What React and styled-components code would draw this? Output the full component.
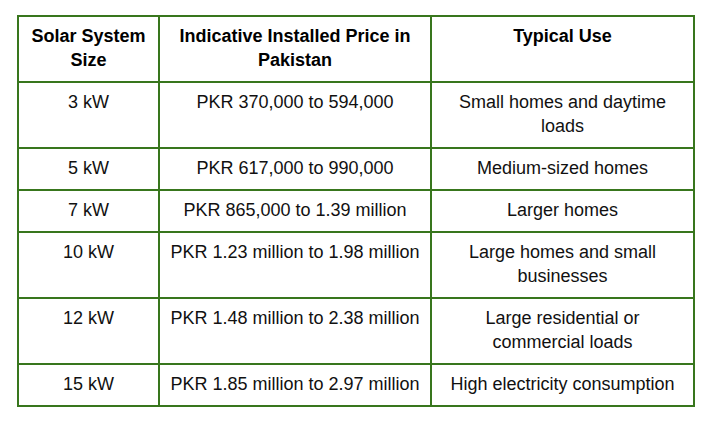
import React from 'react'
import styled, { createGlobalStyle } from 'styled-components'

const GlobalStyle = createGlobalStyle`
  html, body {
    margin: 0;
    padding: 0;
    background: #fff;
  }
`

const Page = styled.div`
  padding: 15px 17px;
  font-family: 'Liberation Sans', Arial, sans-serif;
  color: #111;
`

const Table = styled.table`
  width: 678px;
  border-collapse: collapse;
  table-layout: fixed;
  border: 2px solid #38761d;
`

const Col = styled.col`
  width: ${({ $w }) => $w}px;
`

const Cell = styled.td`
  border: 2px solid #38761d;
  padding: 7px 6px 9px;
  font-size: 18px;
  line-height: 24px;
  text-align: center;
  vertical-align: top;
  font-weight: ${({ $head }) => ($head ? 700 : 400)};
  color: ${({ $head }) => ($head ? '#000' : '#111')};
`

const rows = [
  [['3 kW'], ['PKR 370,000 to 594,000'], ['Small homes and daytime', 'loads']],
  [['5 kW'], ['PKR 617,000 to 990,000'], ['Medium-sized homes']],
  [['7 kW'], ['PKR 865,000 to 1.39 million'], ['Larger homes']],
  [['10 kW'], ['PKR 1.23 million to 1.98 million'], ['Large homes and small', 'businesses']],
  [['12 kW'], ['PKR 1.48 million to 2.38 million'], ['Large residential or', 'commercial loads']],
  [['15 kW'], ['PKR 1.85 million to 2.97 million'], ['High electricity consumption']],
]

const head = [
  ['Solar System', 'Size'],
  ['Indicative Installed Price in', 'Pakistan'],
  ['Typical Use'],
]

function Lines({ lines }) {
  return lines.map((l, i) => (
    <React.Fragment key={i}>
      {i > 0 && <br />}
      {l}
    </React.Fragment>
  ))
}

export default function App() {
  return (
    <Page>
      <GlobalStyle />
      <Table>
        <colgroup>
          <Col $w={141} />
          <Col $w={272} />
          <Col $w={263} />
        </colgroup>
        <thead>
          <tr>
            {head.map((h, i) => (
              <Cell as='th' $head key={i}>
                <Lines lines={h} />
              </Cell>
            ))}
          </tr>
        </thead>
        <tbody>
          {rows.map((r, i) => (
            <tr key={i}>
              {r.map((c, j) => (
                <Cell key={j}>
                  <Lines lines={c} />
                </Cell>
              ))}
            </tr>
          ))}
        </tbody>
      </Table>
    </Page>
  )
}
